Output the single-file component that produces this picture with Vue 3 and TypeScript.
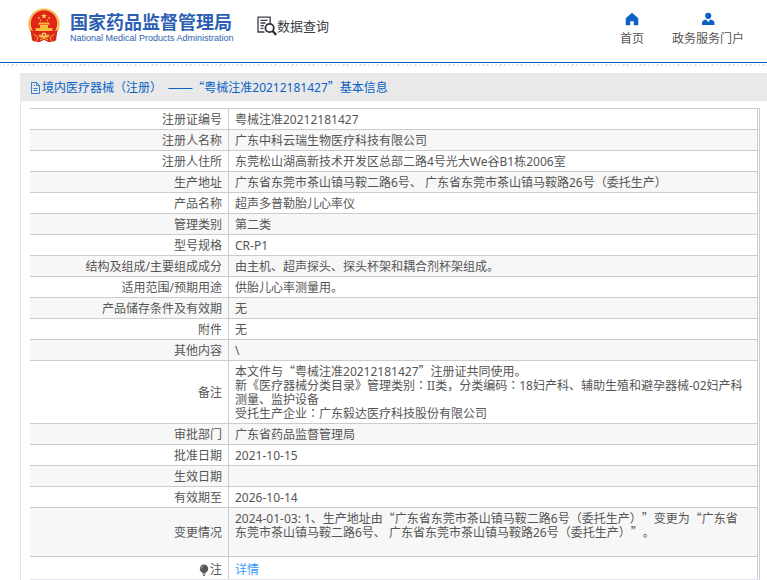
<script setup lang="ts">
interface Run {
  text: string
  kind: 'plain' | 'wide' | 'mid' | 'dash'
}

interface Row {
  label: string
  lines: string[]
}

const title = '境内医疗器械（注册）\u00a0 ——“粤械注准20212181427”基本信息'

const rows: Row[] = [
  { label: '注册证编号', lines: ['粤械注准20212181427'] },
  { label: '注册人名称', lines: ['广东中科云瑞生物医疗科技有限公司'] },
  { label: '注册人住所', lines: ['东莞松山湖高新技术开发区总部二路4号光大We谷B1栋2006室'] },
  { label: '生产地址', lines: ['广东省东莞市茶山镇马鞍二路6号、 广东省东莞市茶山镇马鞍路26号（委托生产）'] },
  { label: '产品名称', lines: ['超声多普勒胎儿心率仪'] },
  { label: '管理类别', lines: ['第二类'] },
  { label: '型号规格', lines: ['CR-P1'] },
  { label: '结构及组成/主要组成成分', lines: ['由主机、超声探头、探头杯架和耦合剂杯架组成。'] },
  { label: '适用范围/预期用途', lines: ['供胎儿心率测量用。'] },
  { label: '产品储存条件及有效期', lines: ['无'] },
  { label: '附件', lines: ['无'] },
  { label: '其他内容', lines: ['\\'] },
  {
    label: '备注',
    lines: [
      '本文件与“粤械注准20212181427”注册证共同使用。',
      '新《医疗器械分类目录》管理类别：II类，分类编码：18妇产科、辅助生殖和避孕器械-02妇产科测量、监护设备',
      '受托生产企业：广东毅达医疗科技股份有限公司',
    ],
  },
  { label: '审批部门', lines: ['广东省药品监督管理局'] },
  { label: '批准日期', lines: ['2021-10-15'] },
  { label: '生效日期', lines: [''] },
  { label: '有效期至', lines: ['2026-10-14'] },
  {
    label: '变更情况',
    lines: [
      '2024-01-03: 1、生产地址由“广东省东莞市茶山镇马鞍二路6号（委托生产）”变更为“广东省东莞市茶山镇马鞍二路6号、 广东省东莞市茶山镇马鞍路26号（委托生产）”。',
      '',
    ],
  },
]

function kindOf(part: string): Run['kind'] {
  if (part === '：') return 'mid'
  if (part.startsWith('—')) return 'dash'
  return /^[“”]/.test(part) ? 'wide' : 'plain'
}

// Quotes take the full-width Chinese form, dashes join up, colons are centred.
function runs(text: string): Run[] {
  return text
    .split(/([“”]|—+|：)/)
    .filter((part) => part !== '')
    .map((part) => ({ text: part, kind: kindOf(part) }))
}
</script>

<template>
  <div class="page">
    <header class="header">
      <a class="brand" href="#">
        <svg class="emblem" viewBox="0 0 32 34" aria-hidden="true">
          <path d="M7 25 L25 25 L27 33 L20 34 L16 31 L12 34 L5 33Z" fill="#d9281c" />
          <circle cx="16" cy="16" r="15.6" fill="#f0b43c" />
          <circle cx="16" cy="16" r="14.4" fill="#f7d265" />
          <circle cx="16" cy="15.4" r="13.2" fill="#e2231a" />
          <path d="M16 5.200l.8 1.900 2.100.2-1.600 1.300.5 2-1.800-1.100-1.800 1.100.5-2-1.600-1.300 2.100-.2z" fill="#f9d54a" />
          <g fill="#f4bd3b">
            <circle cx="10.800" cy="10" r=".9" />
            <circle cx="21.200" cy="10" r=".9" />
            <circle cx="12.600" cy="12.400" r=".8" />
            <circle cx="19.400" cy="12.400" r=".8" />
            <path d="M11 14.600h10l1 2H10zM12 17h8v3h-8zM7.600 20h16.800v3H7.600z" />
          </g>
          <path d="M2.500 21.500c3 2.200 7 3 13.500 3s10.500-.8 13.500-3l-1.500 11-6 1.500-6-2-6 2-6-1.500z" fill="#d9281c" />
          <path d="M10 26.800h12l-2 3h-8z" fill="#f0a83a" />
          <circle cx="16" cy="27" r="2.400" fill="#f9d766" />
          <circle cx="16" cy="27" r="1" fill="#d9281c" />
          <path d="M5.500 26l4.500 3.500-1.500 3.500M26.500 26l-4.500 3.500 1.500 3.500M12 31.800l4-1.500 4 1.500" fill="none" stroke="#f4bd3b" />
        </svg>
        <span class="brand-text">
          <span class="brand-cn">国家药品监督管理局</span>
          <span class="brand-en">National Medical Products Administration</span>
        </span>
      </a>
      <a class="query" href="#">
        <svg class="query-icon" viewBox="0 0 20 20" aria-hidden="true">
          <path d="M7.500 16H1V1.200h12.200V7M3.500 4.300h7M3.500 7h5M3.500 9.700h3.500M3.500 12.400h3" fill="none" stroke="#3d3c4a" stroke-width="1.300" />
          <circle cx="12.600" cy="12" r="4.200" fill="#fff" stroke="#2d2c3a" stroke-width="1.800" />
          <path d="M15.600 15l3.600 3.800" stroke="#2d2c3a" stroke-width="2.400" />
        </svg>
        <span>数据查询</span>
      </a>
      <nav class="nav">
        <a class="nav-item" href="#">
          <svg class="nav-icon" viewBox="0 0 14 14" aria-hidden="true">
            <path d="M7 1L1 6.300V13h4V9h4v4h4V6.300z" fill="#0a62c4" stroke="#0a62c4" stroke-width=".5" stroke-linejoin="round" />
          </svg>
          <span>首页</span>
        </a>
        <a class="nav-item" href="#">
          <svg class="nav-icon" viewBox="0 0 14 14" aria-hidden="true">
            <circle cx="7.200" cy="3.800" r="3.100" fill="#0a62c4" />
            <path d="M1 13v-2.200C1 8.800 3 7.800 5 7.600L7.200 10l2.200-2.400c2 .2 4 1.200 4 3.200V13z" fill="#0a62c4" />
          </svg>
          <span>政务服务门户</span>
        </a>
      </nav>
    </header>
    <div class="hatch"></div>

    <main class="panel">
      <h1 class="panel-title">
        <svg class="doc-icon" viewBox="0 0 11 12" aria-hidden="true">
          <path d="M1.500 .5h5l3 3v8h-8zM6.500 .5v3h3M3.500 3.500h1.500M3.500 6.500h4M3.500 8.500h4" fill="none" stroke="#3b7fd0" />
        </svg>
        <span><span v-for="(run, i) in runs(title)" :key="i" :class="run.kind">{{ run.text }}</span></span>
      </h1>
      <div class="panel-body">
        <div class="frame">
          <table class="info">
            <tbody>
              <tr v-for="row in rows" :key="row.label">
                <th scope="row">{{ row.label }}</th>
                <td>
                  <div v-for="(line, n) in row.lines" :key="n" class="line">
                    <span v-for="(run, i) in runs(line)" :key="i" :class="run.kind">{{ run.text }}</span>
                  </div>
                </td>
              </tr>
              <tr class="note">
                <th scope="row">
                  <span class="note-label">
                    <svg class="bulb" viewBox="0 0 10 12" aria-hidden="true">
                      <path d="M5 .5a4.200 4.200 0 0 1 2.400 7.600L6.500 9h-3l-.9-.9A4.200 4.200 0 0 1 5 .5z" fill="#55555a" />
                      <path d="M3.500 10h3M4 11.300h2" stroke="#55555a" />
                      <path d="M2.300 4.500c.1-1.200.8-2 1.900-2.400" fill="none" stroke="#ddd" stroke-width=".8" />
                    </svg>注</span>
                </th>
                <td><a class="detail" href="#">详情</a></td>
              </tr>
            </tbody>
          </table>
        </div>
      </div>
    </main>
  </div>
</template>

<style>
body {
  background: #fff;
}
</style>

<style scoped>
.page {
  color: #555;
  font-family: "Noto Sans", "Noto Sans CJK SC", sans-serif;
  font-size: 12px;
  line-height: 14px;
  text-spacing-trim: space-all;
}

a {
  color: inherit;
  text-decoration: none;
}

.wide,
.mid,
.dash {
  line-height: 0;
}

.wide {
  font-family: "Noto Sans CJK SC", sans-serif;
}

.mid {
  font-family: "Noto Sans CJK TC", sans-serif;
}

.dash {
  font-family: "Liberation Sans", sans-serif;
}

.header {
  display: flex;
  align-items: flex-start;
  box-sizing: border-box;
  height: 63px;
  padding: 8px 23px 0 28px;
  border-bottom: 1px solid #0a62c4;
}

.brand {
  display: flex;
  gap: 10px;
}

.emblem {
  width: 32px;
  height: 34px;
}

.brand-text {
  display: flex;
  flex-direction: column;
  width: 162px;
  padding-top: 3px;
  color: #2c5fb3;
  white-space: nowrap;
}

.brand-cn {
  font-family: "Noto Sans CJK SC", sans-serif;
  font-size: 18px;
  font-weight: 700;
  line-height: 20px;
}

.brand-en {
  font-family: "Liberation Sans", sans-serif;
  font-size: 9px;
  line-height: 14px;
}

.query {
  display: flex;
  align-items: center;
  margin: 8px 0 0 25px;
  color: #3c3c46;
  font-size: 13px;
  line-height: 18px;
}

.query-icon {
  width: 20px;
  height: 20px;
}

.nav {
  display: flex;
  gap: 28px;
  margin-left: auto;
  padding-top: 4px;
}

.nav-item {
  display: flex;
  flex-direction: column;
  align-items: center;
  gap: 6px;
}

.nav-icon {
  width: 14px;
  height: 14px;
}

.hatch {
  height: 2px;
  margin-top: 1px;
  background: repeating-linear-gradient(135deg, #ddd 0 1px, #fff 1px 3px);
}

.panel {
  margin: 7px 0 0 20px;
}

.panel-title {
  display: flex;
  align-items: center;
  box-sizing: border-box;
  height: 28px;
  margin: 0;
  padding: 2px 10px 0;
  border-bottom: 1px solid #e4e4ee;
  background: #e9e9e9;
  color: #0a62c4;
  font-size: 12px;
  font-weight: 400;
  line-height: 14px;
}

.doc-icon {
  width: 11px;
  height: 12px;
  margin-right: 1px;
}

.panel-body {
  padding: 7px 7px 0 9px;
  border-left: 1px solid #e4e4ea;
}

.frame {
  padding-right: 1px;
  border: solid #ccc;
  border-width: 1px 1px 0 0;
  border-bottom: 1px solid #e4e4ee;
}

.info {
  width: 100%;
  border-right: 1px solid #ccc;
  border-spacing: 0;
  table-layout: fixed;
}

.info th,
.info td {
  height: 14px;
  padding: 4px 6px 2px;
  border-bottom: 1px solid #ccc;
  font-weight: 400;
  vertical-align: middle;
}

.info th {
  width: 186px;
  text-align: right;
}

.info td {
  padding-right: 12px;
  border-left: 1px solid #ccc;
}

.info tr:nth-child(even) {
  background: #f7f7f7;
}

.line {
  min-height: 14px;
}

.info .note th,
.info .note td {
  padding-top: 6px;
  border-bottom: 0;
}

.info .note {
  background: #fff;
}

.note-label {
  display: flex;
  align-items: center;
  justify-content: flex-end;
}

.bulb {
  width: 10px;
  height: 12px;
  margin-right: 1px;
}

.detail {
  color: #3399ff;
}
</style>
